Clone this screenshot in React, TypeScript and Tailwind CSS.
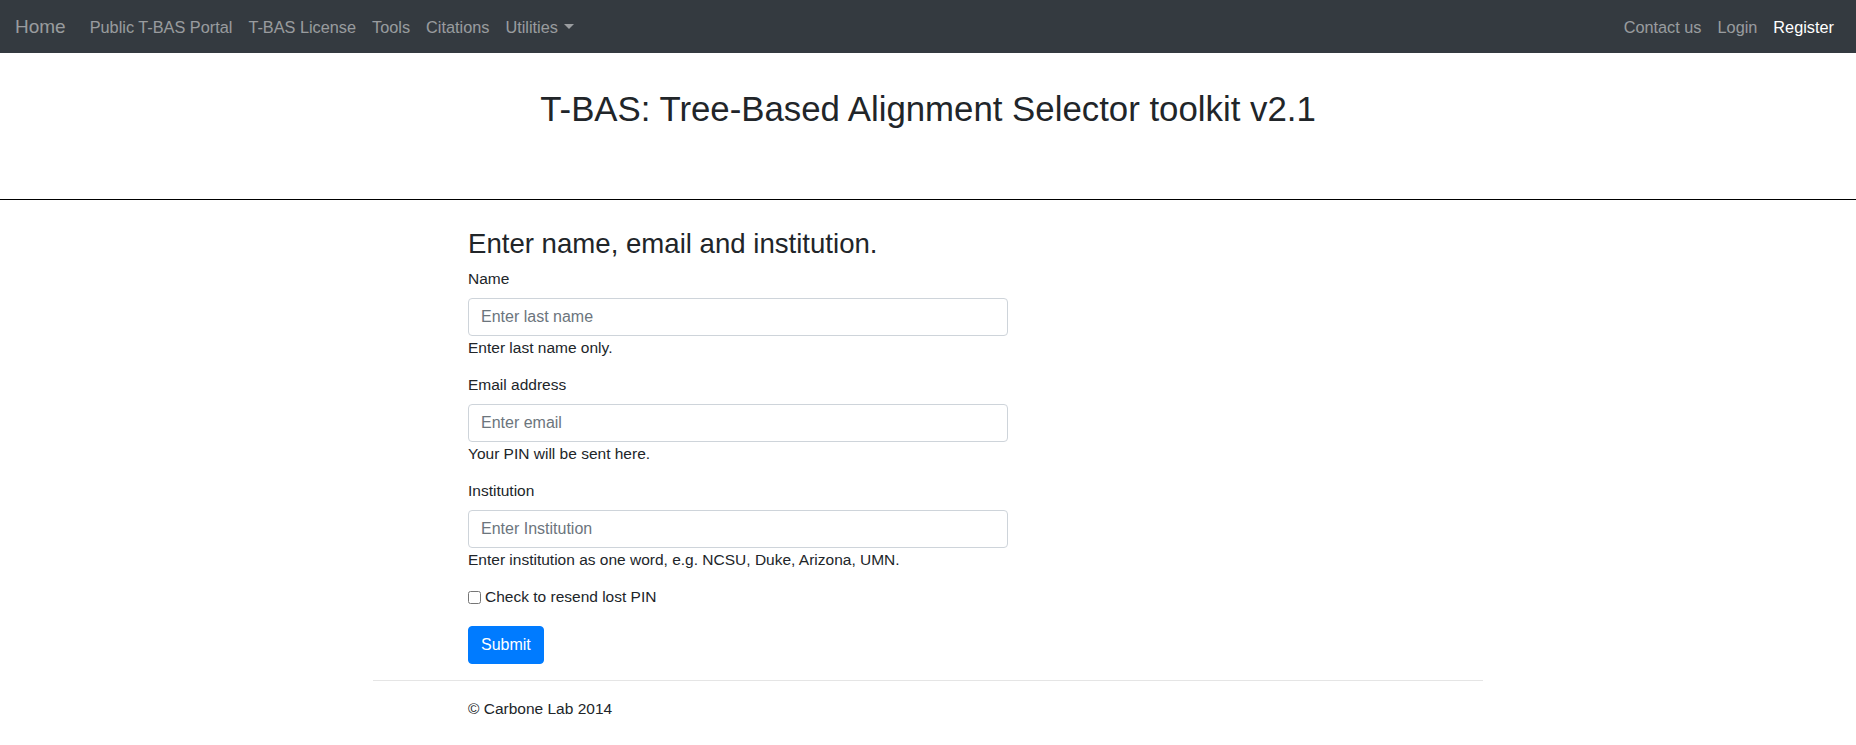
import React from "react";

function NavLink({ children, active = false }: { children: React.ReactNode; active?: boolean }) {
  return (
    <a
      href="#"
      className={
        active
          ? "px-2 text-[16.3px] leading-6 text-white"
          : "px-2 text-[16.3px] leading-6 text-white/50"
      }
    >
      {children}
    </a>
  );
}

function Field({
  label,
  placeholder,
  help,
}: {
  label: string;
  placeholder: string;
  help: string;
}) {
  return (
    <div className="mb-[13px]">
      <label className="block text-[15.5px] leading-6 mb-[7px]">{label}</label>
      <input
        type="text"
        placeholder={placeholder}
        className="block w-full h-[38px] rounded-[4px] border border-[#ced4da] bg-white px-3 text-[16px] text-[#495057] placeholder:text-[#6c757d] outline-none"
      />
      <div className="text-[15.5px] leading-6">{help}</div>
    </div>
  );
}

export default function App() {
  return (
    <div className="min-h-[745px] bg-white text-[#212529] font-['Liberation_Sans',Arial,sans-serif]">
      <nav className="h-[53px] bg-[#343a40] flex items-center justify-between pl-[15px] pr-[14px]">
        <div className="flex items-center">
          <a href="#" className="text-[19px] leading-[30px] text-white/50 mr-4">
            Home
          </a>
          <div className="flex items-center">
            <NavLink>Public T-BAS Portal</NavLink>
            <NavLink>T-BAS License</NavLink>
            <NavLink>Tools</NavLink>
            <NavLink>Citations</NavLink>
            <a href="#" className="px-2 text-[16.3px] leading-6 text-white/50 flex items-center">
              Utilities
              <span className="ml-[6px] inline-block w-0 h-0 border-t-[5px] border-x-[5px] border-t-current border-x-transparent" />
            </a>
          </div>
        </div>
        <div className="flex items-center">
          <NavLink>Contact us</NavLink>
          <NavLink>Login</NavLink>
          <NavLink active>Register</NavLink>
        </div>
      </nav>

      <header className="h-[147px] pt-[35px] border-b border-black">
        <h2 className="text-center text-[34.8px] leading-[1.2] font-normal">
          T-BAS: Tree-Based Alignment Selector toolkit v2.1
        </h2>
      </header>

      <div className="mx-auto w-[1140px] px-[15px]">
        <div className="ml-[80px] w-[570px] px-[15px] pt-[27px]">
          <h4 className="text-[27.6px] leading-[33px] font-normal mb-[7px]">
            Enter name, email and institution.
          </h4>
          <form>
            <Field label="Name" placeholder="Enter last name" help="Enter last name only." />
            <Field label="Email address" placeholder="Enter email" help="Your PIN will be sent here." />
            <Field
              label="Institution"
              placeholder="Enter Institution"
              help="Enter institution as one word, e.g. NCSU, Duke, Arizona, UMN."
            />
            <div className="mb-[17px] flex items-center h-6">
              <input type="checkbox" className="w-[13px] h-[13px] mr-[4px]" />
              <label className="text-[15.5px] leading-6">Check to resend lost PIN</label>
            </div>
            <button
              type="button"
              className="h-[38px] rounded-[4px] border border-[#007bff] bg-[#007bff] px-3 text-[16px] text-white"
            >
              Submit
            </button>
          </form>
        </div>
        <hr className="mt-4 border-0 border-t border-[#e5e5e5]" />
        <footer className="pt-4 pl-[95px]">
          <p className="text-[15.5px] leading-6">© Carbone Lab 2014</p>
        </footer>
      </div>
    </div>
  );
}
